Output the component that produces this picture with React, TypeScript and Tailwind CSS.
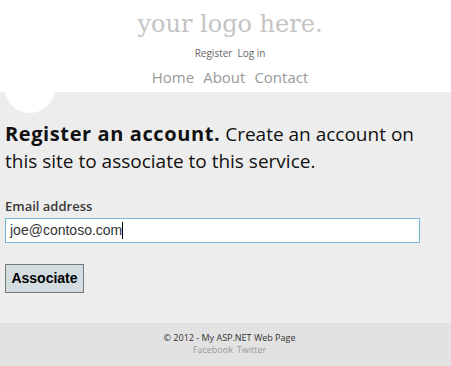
import React from "react";

export default function App() {
  return (
    <div className="w-[451px] h-[366px] flex flex-col bg-white overflow-hidden" style={{ fontFamily: '"Open Sans", "Noto Sans", sans-serif' }}>
      <header className="h-[92px] flex flex-col items-center bg-white pl-[9px]">
        <div className="mt-[7px] text-[24px] leading-[34px] text-[#c4c4c4]" style={{ fontFamily: '"DejaVu Serif", serif' }}>your logo here.</div>
        <div className="mt-[6px] text-[10px] leading-[12px] text-[#666] flex gap-[5px]">
          <span>Register</span>
          <span>Log in</span>
        </div>
        <nav className="mt-[8px] text-[15px] leading-[20px] text-[#999] flex gap-[9px]">
          <span>Home</span>
          <span>About</span>
          <span>Contact</span>
        </nav>
      </header>
      <main className="relative flex-1 bg-[#ededed] px-[5px] overflow-hidden">
        <div className="absolute left-[5px] top-[-29px] w-[50px] h-[50px] rounded-full bg-white"></div>
        <h1 className="mt-[28px] text-[19px] leading-[27px] text-[#111]">
          <span className="font-bold text-[20px] tracking-[0.6px]">Register an account.</span> Create an account on this site to associate to this service.
        </h1>
        <label className="block mt-[23px] text-[13px] leading-[16px] font-semibold text-[#3a3a3a]">Email address</label>
        <div className="mt-[4px] w-[415px] h-[25px] border border-[#6fb8d8] bg-white flex items-center px-[4px] text-[14px] text-[#333]" style={{ fontFamily: '"Liberation Sans", Arial, sans-serif' }}>
          joe@contoso.com<span className="inline-block w-px h-[17px] bg-black"></span>
        </div>
        <button className="mt-[21px] w-[79px] h-[29px] border border-[#787878] bg-[#d3dce0] text-[14px] font-bold text-black" style={{ fontFamily: '"Liberation Sans", Arial, sans-serif' }}>Associate</button>
      </main>
      <footer className="h-[43px] bg-[#e2e2e2] flex flex-col items-center pl-[8px] pt-[9px] text-[9px] leading-[12px]">
        <div className="text-[#333]">© 2012 - My ASP.NET Web Page</div>
        <div className="text-[#999] flex gap-[4px]">
          <span>Facebook</span>
          <span>Twitter</span>
        </div>
      </footer>
    </div>
  );
}
